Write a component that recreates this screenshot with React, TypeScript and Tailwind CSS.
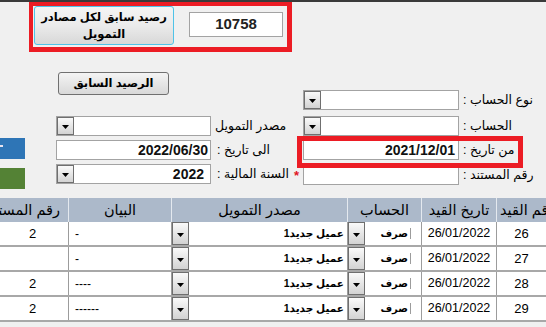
import React from "react";

const Tri = () => (
  <svg width="7" height="4" viewBox="0 0 7 4" className="mt-[2px]">
    <path d="M0 0H7L3.5 4Z" fill="#000" />
  </svg>
);

const ArrowBox = ({ cls = "" }: { cls?: string }) => (
  <div
    className={
      "w-[17px] h-full shrink-0 border border-[#6f6f6f] bg-linear-to-b from-[#fafafa] to-[#d3d3d3] flex items-center justify-center " +
      cls
    }
  >
    <Tri />
  </div>
);

const Select = ({ w, value }: { w: string; value?: string }) => (
  <div className={"h-[20px] shrink-0 border border-[#a3a3a3] bg-white flex " + w}>
    <ArrowBox />
    <div className="flex-1 flex items-center justify-end pr-[6px] text-[14px] font-bold text-[#111] leading-none">
      {value}
    </div>
  </div>
);

const Input = ({ w, value, pr = "pr-[2px]" }: { w: string; value?: string; pr?: string }) => (
  <div
    className={
      "h-[20px] shrink-0 border border-[#a3a3a3] bg-white flex items-center justify-end text-[14px] font-bold text-[#111] leading-none " +
      w +
      " " +
      pr
    }
  >
    {value}
  </div>
);

const Label = ({ text, cls = "" }: { text: string; cls?: string }) => (
  <span dir="rtl" className={"text-[12.5px] text-black whitespace-nowrap leading-none " + cls}>
    {text}
  </span>
);

const rows = [
  { n: "26", doc: "2", desc: "-" },
  { n: "27", doc: "", desc: "-" },
  { n: "28", doc: "2", desc: "----" },
  { n: "29", doc: "2", desc: "------" },
];

export default function App() {
  return (
    <div className="relative w-[546px] h-[327px] overflow-hidden bg-[#f0f0f0] font-['Liberation_Sans','DejaVu_Sans',sans-serif] text-black">
      {/* top dark bar */}
      <div className="h-[2px] bg-[#3a3a3a]" />

      {/* top red highlighted group */}
      <div className="flex pl-[29px]">
        <div className="w-[263px] h-[50px] border-t-4 border-l-4 border-r-[5px] border-b-[5px] border-[#ec1c24] flex">
          <button
            dir="rtl"
            className="ml-[1px] w-[140px] h-[39px] rounded-[3px] border border-[#4fc3e8] bg-linear-to-b from-[#f4f4f4] via-[#ebebeb] to-[#d8d8d8] text-[11.5px] font-bold leading-[17px] text-black flex flex-col items-center justify-center"
          >
            <span>رصيد سابق لكل مصادر</span>
            <span>التمويل</span>
          </button>
          <div className="ml-[15px] mt-[6px] w-[94px] h-[25px] border border-[#a3a3a3] bg-white flex items-center justify-center text-[15px] font-bold text-[#222]">
            10758
          </div>
        </div>
      </div>

      {/* middle form */}
      <div className="flex h-[146px]">
        {/* left colored buttons */}
        <div className="w-[25px] shrink-0 flex flex-col">
          <div className="mt-[86px] h-[21px] bg-[#2e75b6] relative">
            <div className="absolute left-0 top-[7px] w-[3px] h-[2px] bg-[#e8e4f0]" />
          </div>
          <div className="mt-[9px] h-[21px] bg-[#548235]" />
        </div>

        {/* left form column */}
        <div className="ml-[31px] w-[247px] shrink-0 flex flex-col">
          <button
            dir="rtl"
            className="ml-[2px] mt-[20px] w-[111px] h-[23px] rounded-[3px] border border-[#707070] bg-linear-to-b from-[#f4f4f4] to-[#d9d9d9] text-[11.5px] font-bold text-black flex items-center justify-center leading-none"
          >
            الرصيد السابق
          </button>
          <div className="mt-[21px] flex items-center">
            <Select w="w-[155px]" />
            <Label text="مصدر التمويل" cls="ml-[4px]" />
          </div>
          <div className="mt-[4px] flex items-center">
            <Input w="w-[155px]" value="2022/06/30" />
            <Label text="الى  تاريخ :" cls="ml-[6px]" />
          </div>
          <div className="mt-[4px] flex items-center">
            <Select w="w-[155px]" value="2022" />
            <Label text="السنة المالية :" cls="ml-[6px]" />
            <span className="ml-[5px] text-[13px] font-bold text-[#e0141e] leading-none mt-[3px]">*</span>
          </div>
        </div>

        {/* right form column */}
        <div className="w-[243px] shrink-0 flex flex-col">
          <div className="mt-[38px] flex items-center">
            <Select w="w-[156px]" />
            <Label text="نوع الحساب :" cls="ml-[4px]" />
          </div>
          <div className="mt-[6px] flex items-center">
            <Select w="w-[156px]" />
            <Label text="الحساب :" cls="ml-[4px]" />
          </div>
          <div className="mt-[4px] flex items-center">
            <Input w="w-[156px]" value="2021/12/01" pr="pr-[3px]" />
            <Label text="من تاريخ :" cls="ml-[4px]" />
          </div>
          <div className="mt-[5px] flex items-center">
            <Input w="w-[156px]" />
            <Label text="رقم المستند :" cls="ml-[4px]" />
          </div>
        </div>
      </div>

      {/* red highlight overlay around "from date" */}
      <div className="absolute left-[297px] top-[136px] w-[226px] h-[32px] border-[5px] border-[#ec1c24] pointer-events-none" />

      {/* table */}
      <div className="ml-[-3px] w-[563px]">
        <div className="flex h-[24px] bg-[#acb9ca] text-[14.5px] leading-none">
          <div className="w-[72px] shrink-0 border-r border-[#e4e9ef] flex items-center justify-end pr-[8px]">
            <span dir="rtl" className="whitespace-nowrap shrink-0">رقم المستند</span>
          </div>
          <div dir="rtl" className="w-[103px] shrink-0 border-r border-[#e4e9ef] flex items-center justify-center">البيان</div>
          <div dir="rtl" className="w-[176px] shrink-0 border-r border-[#e4e9ef] flex items-center justify-center">مصدر التمويل</div>
          <div dir="rtl" className="w-[74px] shrink-0 border-r border-[#e4e9ef] flex items-center justify-center">الحساب</div>
          <div dir="rtl" className="w-[75px] shrink-0 border-r border-[#e4e9ef] flex items-center justify-center">تاريخ القيد</div>
          <div className="w-[63px] shrink-0 flex items-center justify-start pl-[3px]">
            <span dir="rtl" className="whitespace-nowrap shrink-0">رقم القيد</span>
          </div>
        </div>
        {rows.map((r) => (
          <div key={r.n} className="flex h-[25px] bg-white border-b-2 border-[#a8a8a8]">
            <div className="w-[72px] shrink-0 border-r border-[#9c9c9c] flex items-center justify-center text-[13px]">{r.doc}</div>
            <div className="w-[103px] shrink-0 border-r border-[#9c9c9c] flex items-center pl-[6px] text-[12px]">{r.desc}</div>
            <div className="w-[176px] shrink-0 border-r border-[#9c9c9c] flex">
              <ArrowBox />
              <div dir="rtl" className="flex-1 flex items-center justify-start pr-[3px] text-[10.5px] font-bold">عميل جديد1</div>
            </div>
            <div className="w-[74px] shrink-0 border-r border-[#9c9c9c] flex">
              <ArrowBox />
              <div className="flex-1 flex items-center justify-end pr-[10px]">
                <span dir="rtl" className="text-[10px] font-bold pr-[2px] border-r border-[#9c9c9c] leading-[11px]">صرف</span>
              </div>
            </div>
            <div className="w-[75px] shrink-0 border-r border-[#9c9c9c] flex items-center justify-center text-[12.5px]">26/01/2022</div>
            <div className="w-[63px] shrink-0 flex items-center justify-center pr-[14px] text-[13px]">{r.n}</div>
          </div>
        ))}
      </div>
    </div>
  );
}
